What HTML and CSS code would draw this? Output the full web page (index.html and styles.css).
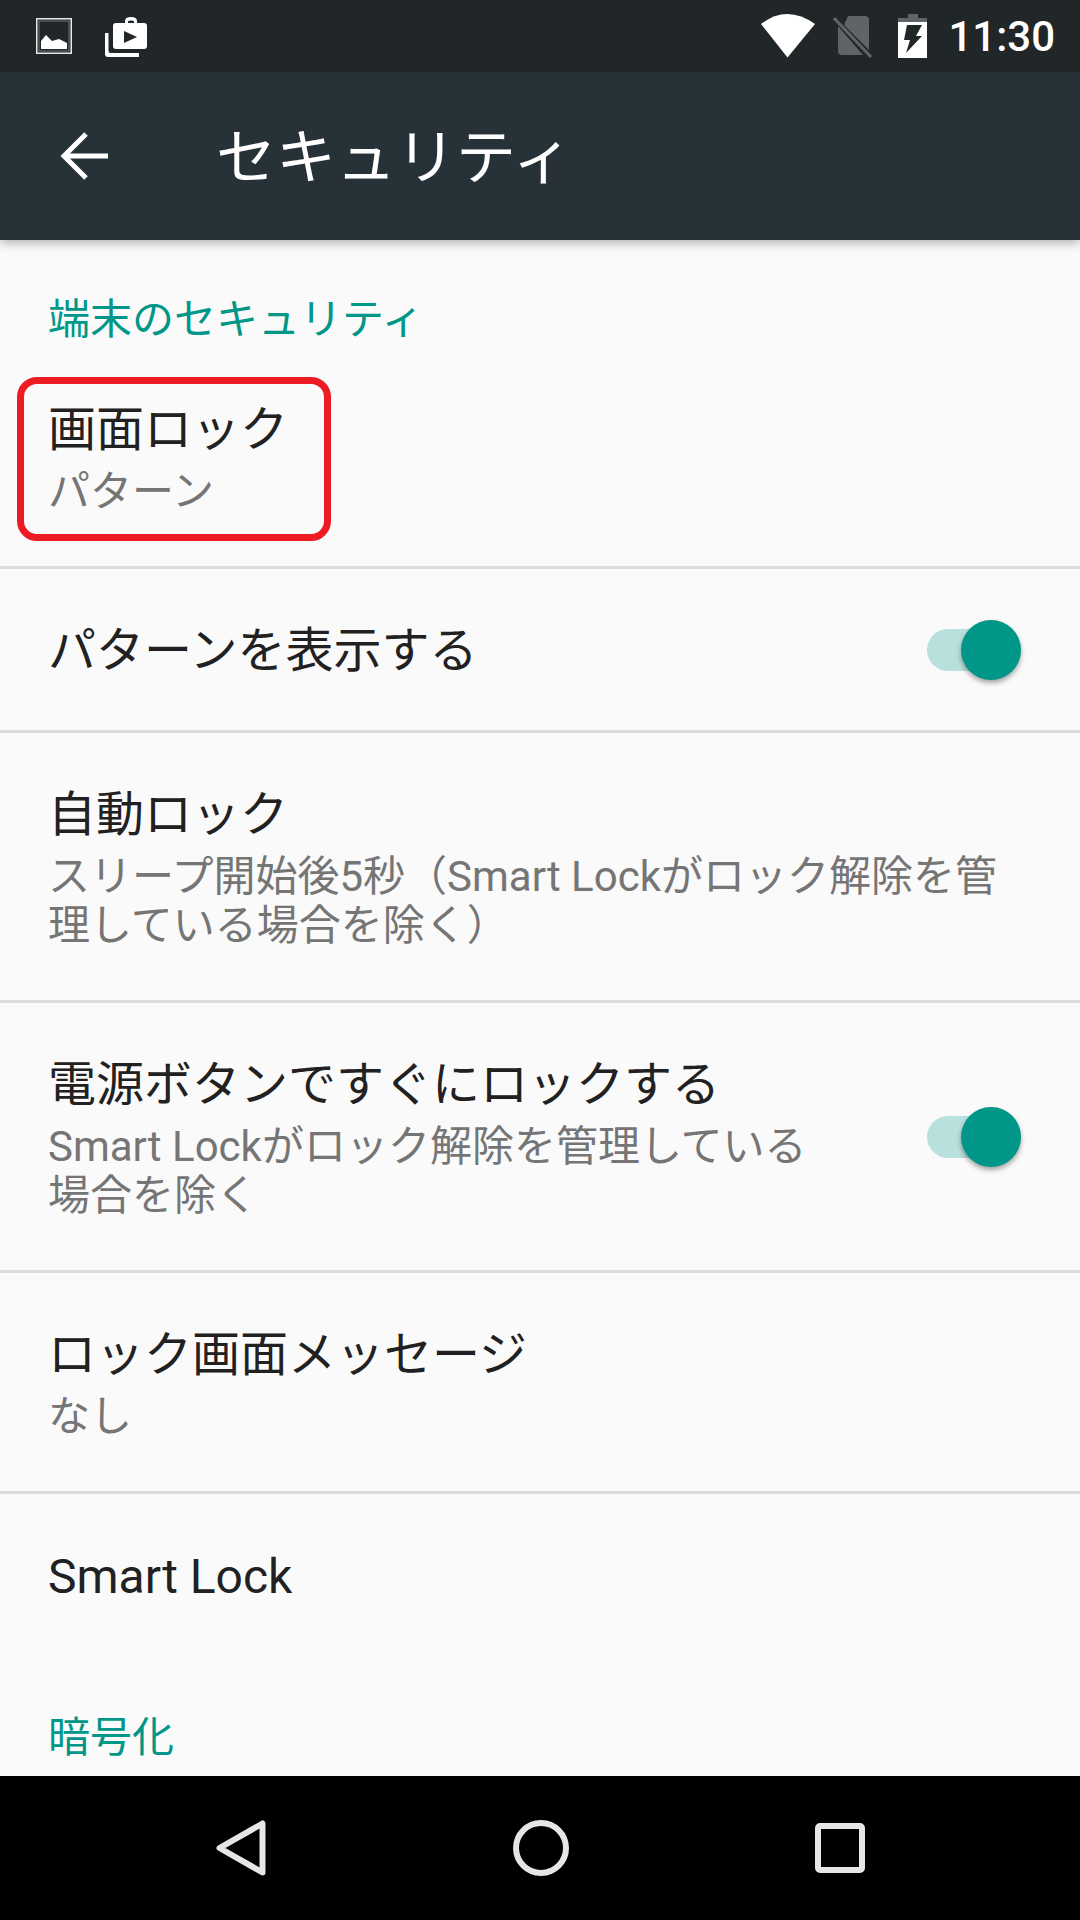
FILE: index.html
```html
<!DOCTYPE html>
<html lang="ja">

  <head>
    <meta charset="UTF-8">
    <meta name="viewport" content="width=device-width, initial-scale=1.0">
    <title>セキュリティ</title>

    <link rel="stylesheet" href="styles.css">
  </head>

  <body>

    <div class="statusBar">
      <svg class="icon-image" width="36" height="36" viewBox="0 0 36 36">
        <rect x="0.75" y="0.75" width="34.5" height="34.5" fill="none" stroke="#e8e8e8" stroke-width="1.5"/>
        <rect x="3" y="3" width="30" height="30" fill="none" stroke="#8a8d8e" stroke-width="0.75"/>
        <path fill="#fff" d="M5 31V23L10 17L16 23L23 21L31 25V31Z"/>
      </svg>
      <svg class="icon-shop" width="44" height="40" viewBox="0 0 44 40">
        <path fill="#fff" d="M4.500 16V34Q4.500 36 6.500 36H35V40H4Q1 40 1 37V16Z"/>
        <path fill="#fff" fill-rule="evenodd" d="M12 6H21V4Q21 0 27 0T33 4V6H40Q43 6 43 9V29Q43 32 40 32H12Q9 32 9 29V9Q9 6 12 6ZM24 6H30V4.500Q30 3.500 27 3.500T24 4.500Z"/>
        <path fill="#212729" d="M20 14L33 20L20 26Z"/>
      </svg>
      <span class="statusSpacer"></span>
      <svg class="icon-wifi" width="54" height="44" viewBox="0 0 54 44">
        <path fill="#fff" d="M26.500 43.500L0 10Q13 0 26.500 0T54 10Z"/>
      </svg>
      <svg class="icon-sim" width="40" height="44" viewBox="0 0 40 44">
        <path fill="#5f6468" d="M15 2H32Q36 2 36 6V36L11 11Z M5 12L30 41H9Q5 41 5 37Z"/>
        <path stroke="#5f6468" stroke-width="3" d="M1 4L38 43"/>
      </svg>
      <svg class="icon-battery" width="29" height="44" viewBox="0 0 29 44">
        <path fill="#5f6468" d="M10 0H20V4H29V9H0V4H10Z"/>
        <path fill="#fff" d="M0 8H29V44H0Z"/>
        <path fill="#212729" d="M9 11H24L18 22H24L8 39L12 26H6Z"/>
      </svg>
      <span class="clock">11:30</span>
    </div>

    <header class="toolbar">
      <svg class="backArrow" width="48" height="48" viewBox="0 0 48 48">
        <path fill="none" stroke="#fff" stroke-width="5" d="M48 24H4M26 2L4 24L26 46"/>
      </svg>
      <h1>セキュリティ</h1>
    </header>

    <main class="settings">
      <h2 class="sectionTitle">端末のセキュリティ</h2>

      <div class="row">
        <div class="rowText">
          <p class="rowTitle">画面ロック</p>
          <p class="rowSummary">パターン</p>
        </div>
        <span class="highlight"></span>
      </div>

      <div class="row row-single">
        <div class="rowText">
          <p class="rowTitle">パターンを表示する</p>
        </div>
        <span class="switch"></span>
      </div>

      <div class="row">
        <div class="rowText">
          <p class="rowTitle">自動ロック</p>
          <p class="rowSummary">スリープ開始後5秒（Smart Lockがロック解除を管<br>理している場合を除く）</p>
        </div>
      </div>

      <div class="row">
        <div class="rowText">
          <p class="rowTitle">電源ボタンですぐにロックする</p>
          <p class="rowSummary">Smart Lockがロック解除を管理している<br>場合を除く</p>
        </div>
        <span class="switch"></span>
      </div>

      <div class="row">
        <div class="rowText">
          <p class="rowTitle">ロック画面メッセージ</p>
          <p class="rowSummary">なし</p>
        </div>
      </div>

      <div class="row row-single row-last">
        <div class="rowText">
          <p class="rowTitle">Smart Lock</p>
        </div>
      </div>

      <h2 class="sectionTitle">暗号化</h2>
    </main>

    <nav class="navBar">
      <svg width="50" height="56" viewBox="0 0 50 56">
        <path fill="none" stroke="#e6e6e6" stroke-width="6" stroke-linejoin="round" d="M46.500 3.500V52.500L3.500 28Z"/>
      </svg>
      <svg width="56" height="56" viewBox="0 0 56 56">
        <circle cx="28" cy="28" r="25" fill="none" stroke="#e6e6e6" stroke-width="6"/>
      </svg>
      <svg width="50" height="50" viewBox="0 0 50 50">
        <rect x="3" y="3" width="44" height="44" rx="2" fill="none" stroke="#e6e6e6" stroke-width="6"/>
      </svg>
    </nav>

  </body>

</html>
```

FILE: styles.css
```css
* {
  margin: 0;
  padding: 0;
  box-sizing: border-box;
}

body {
  width: 1080px;
  height: 1920px;
  display: flex;
  flex-direction: column;
  overflow: hidden;
  background-color: #fafafa;
  font-family: Roboto, "Noto Sans CJK JP", sans-serif;
}

.statusBar {
  height: 72px;
  flex-shrink: 0;
  display: flex;
  align-items: center;
  padding: 0 25px 0 36px;
  background-color: #212729;

  & .statusSpacer {
    flex: 1;
  }

  & .icon-shop {
    margin-left: 32px;
    margin-top: 2px;
  }

  & .icon-sim {
    margin-left: 18px;
  }

  & .icon-battery {
    margin-left: 25px;
  }

  & .clock {
    margin-left: 21px;
    color: #fff;
    font-size: 42px;
    font-weight: 500;
  }
}

.toolbar {
  height: 168px;
  flex-shrink: 0;
  display: flex;
  align-items: center;
  padding-left: 60px;
  position: relative;
  background-color: #263238;
  box-shadow: 0 3px 10px rgba(0, 0, 0, 0.3);

  & h1 {
    margin-left: 108px;
    margin-bottom: 7px;
    color: #fff;
    font-size: 60px;
    font-weight: 400;
  }
}

.settings {
  flex: 1;
  overflow: hidden;
}

.sectionTitle {
  padding: 55px 48px 4px;
  color: #009688;
  font-size: 42px;
  font-weight: 400;
  line-height: 49px;
}

.row {
  display: flex;
  align-items: center;
  justify-content: space-between;
  position: relative;
  padding: 50px 59px 50px 48px;
  border-bottom: 3px solid #dcdcdc;
}

.row-single {
  height: 164px;
  padding-top: 0;
  padding-bottom: 0;

  & .rowText {
    padding-top: 2px;
  }
}

.row-last {
  border-bottom: none;
}

.rowTitle {
  color: #212121;
  font-size: 48px;
  line-height: 64px;
}

.rowSummary {
  margin-top: 5px;
  color: #757575;
  font-size: 42px;
  line-height: 49px;
}

.switch {
  width: 94px;
  height: 42px;
  position: relative;
  flex-shrink: 0;
  border-radius: 21px;
  background-color: #b8e0dc;

  &::after {
    content: "";
    position: absolute;
    top: -9px;
    right: 0;
    width: 60px;
    height: 60px;
    border-radius: 50%;
    background-color: #009688;
    box-shadow: 0 3px 5px rgba(0, 0, 0, 0.35);
  }
}

.highlight {
  position: absolute;
  left: 17px;
  top: 29px;
  width: 314px;
  height: 164px;
  border: 7px solid #ed1c24;
  border-radius: 20px;
}

.navBar {
  height: 144px;
  flex-shrink: 0;
  display: flex;
  align-items: center;
  justify-content: space-between;
  padding: 0 215px 0 216px;
  background-color: #000;
}
```
